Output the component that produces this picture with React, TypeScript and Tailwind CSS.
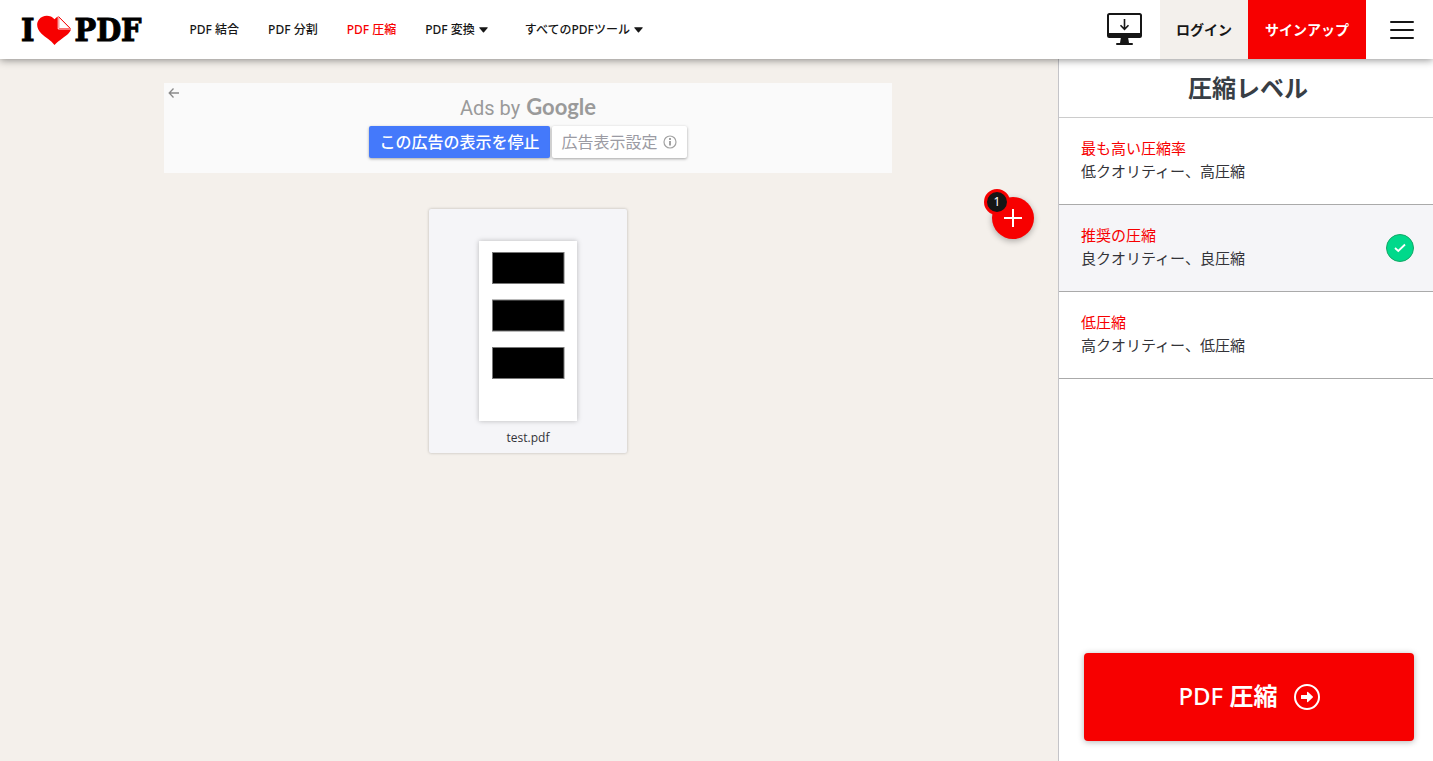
import { useState } from 'react';

const navItems = [
  { label: 'PDF 結合' },
  { label: 'PDF 分割' },
  { label: 'PDF 圧縮', active: true },
  { label: 'PDF 変換', menu: true },
  { label: 'すべてのPDFツール', menu: true },
];

const levels = [
  { id: 'extreme', title: '最も高い圧縮率', text: '低クオリティー、高圧縮' },
  { id: 'recommended', title: '推奨の圧縮', text: '良クオリティー、良圧縮' },
  { id: 'low', title: '低圧縮', text: '高クオリティー、低圧縮' },
];

function Logo() {
  return (
    <a
      href="#"
      aria-label="I love PDF"
      className="flex items-center font-['DejaVu_Serif_Condensed','DejaVu_Serif',serif] font-bold text-[32px] leading-8 text-black [-webkit-text-stroke:1px_black]"
    >
      <span>I</span>
      <svg width="36" height="32" viewBox="0 0 36 32" className="mx-0.5">
        <path
          d="M18.5 31 C15 26.500 9.500 23.500 5.500 19.800 C0.800 15.400 -0.200 9.500 3 5.500 C6.700 0.800 14.500 0.600 18.500 5.300 C19.600 4 21 2.900 22.500 2.200 L35 14.800 C34.300 19.500 30 21.600 26.500 24.300 C23.500 26.600 20.700 28.500 18.500 31Z"
          fill="#f70000"
        />
        <path d="M22.700 2.800 V14.500 H34.300Z" fill="#fff" stroke="#f70000" strokeWidth="1" />
        <path d="M22.200 2.500 V15 H34.800" fill="none" stroke="#fff" strokeWidth="0.900" />
      </svg>
      <span>PDF</span>
    </a>
  );
}

function Caret() {
  return (
    <svg width="9" height="6" viewBox="0 0 9 6" fill="currentColor">
      <path d="M0.600 0.300 H8.400 Q9 0.400 8.600 1 L5 5.300 Q4.500 5.800 4 5.300 L0.400 1 Q0 0.400 0.600 0.300Z" />
    </svg>
  );
}

function DesktopIcon() {
  return (
    <svg width="35" height="32" viewBox="0 0 35 32" fill="none" stroke="#161616">
      <rect x="1" y="1" width="33" height="23" rx="1.500" strokeWidth="2" />
      <path d="M1 20 H34 V23 Q34 24.500 32.500 24.500 H2.500 Q1 24.500 1 23Z" fill="#161616" stroke="none" />
      <path d="M14 24 H21 L22 30 H13Z" fill="#161616" stroke="none" />
      <path d="M10 31 H25" strokeWidth="2" strokeLinecap="round" />
      <path d="M17.500 6 V16 M13.500 12.300 L17.500 16.300 L21.500 12.300" strokeWidth="1.600" />
    </svg>
  );
}

function Header() {
  return (
    <header className="relative z-10 flex h-[59px] items-stretch bg-white shadow-[0_1px_8px_rgba(0,0,0,0.45)]">
      <div className="flex items-center pl-[21px]">
        <Logo />
      </div>
      <nav className="ml-12 flex flex-1 items-center gap-[29px] text-xs font-medium">
        {navItems.map((item) => (
          <a
            key={item.label}
            href="#"
            className={`flex items-center gap-1 whitespace-nowrap ${item.active ? 'text-[#f70000]' : 'text-[#161616]'} ${item.menu ? 'pr-2' : ''}`}
          >
            {item.label}
            {item.menu && <Caret />}
          </a>
        ))}
      </nav>
      <div className="flex items-stretch text-sm font-bold">
        <a href="#" aria-label="デスクトップ版" className="mr-[18px] flex items-center pb-px">
          <DesktopIcon />
        </a>
        <a href="#" className="flex items-center bg-[#f3f0ec] px-4 text-[#161616]">ログイン</a>
        <a href="#" className="flex items-center bg-[#f70000] px-[17px] text-white">サインアップ</a>
        <button aria-label="メニュー" className="flex items-center pr-[19px] pl-6">
          <svg width="24" height="18" viewBox="0 0 24 18" stroke="#161616" strokeWidth="2" strokeLinecap="round">
            <path d="M1 1 H23 M1 9 H23 M1 17 H23" />
          </svg>
        </button>
      </div>
    </header>
  );
}

function AdBanner() {
  return (
    <div className="relative flex h-[90px] w-full max-w-[728px] flex-col items-center bg-[#fafafa] pt-2.5">
      <button aria-label="戻る" className="absolute top-1 left-1">
        <svg width="12" height="12" viewBox="0 0 12 12" fill="none" stroke="#8a8a8a" strokeWidth="1.300">
          <path d="M11 6 H1.500 M5.500 1.500 L1.200 6 L5.500 10.500" />
        </svg>
      </button>
      <p className="flex h-[30px] items-baseline gap-1.5 text-[#9a9a9a]">
        <span className="font-[Roboto,sans-serif] text-xl leading-7">Ads by</span>
        <span className="font-[Lato,sans-serif] text-[22px] leading-7 font-bold">Google</span>
      </p>
      <div className="mt-[3px] flex gap-0.5 text-base leading-8">
        <button className="h-8 rounded-xs bg-[#4479fb] px-2.5 leading-[31px] font-medium text-white shadow-[0_1px_3px_rgba(0,0,0,0.35)]">
          この広告の表示を停止
        </button>
        <button className="flex h-8 items-center gap-[5px] rounded-xs bg-white px-2.5 text-[#9b9ba3] shadow-[0_1px_3px_rgba(0,0,0,0.35)]">
          広告表示設定
          <svg width="14" height="14" viewBox="0 0 14 14" fill="none" stroke="#a3a3a3">
            <circle cx="7" cy="7" r="6" strokeWidth="1.200" />
            <path d="M7 6 V10.500" strokeWidth="2" />
            <path d="M7 3 V5" strokeWidth="2" />
          </svg>
        </button>
      </div>
    </div>
  );
}

function FileCard() {
  return (
    <div className="mt-9 flex w-[198px] flex-col items-center rounded-xs bg-[#f5f5f8] pt-8 pb-1.5 shadow-[0_0_3px_rgba(0,0,0,0.25)]">
      <svg width="98" height="180" viewBox="0 0 98 180" className="bg-white shadow-[0_0_5px_rgba(0,0,0,0.25)]">
        <g fill="#000" stroke="#777" strokeWidth="1">
          <rect x="13.500" y="11.500" width="71.500" height="31" />
          <rect x="13.500" y="59" width="71.500" height="31" />
          <rect x="13.500" y="106.500" width="71.500" height="31" />
        </g>
      </svg>
      <span className="mt-2 font-['Open_Sans',sans-serif] text-xs leading-[18px] text-[#333338]">test.pdf</span>
    </div>
  );
}

export default function App() {
  const [level, setLevel] = useState('recommended');

  return (
    <div className="flex min-h-screen flex-col bg-[#f4f0eb] font-['Noto_Sans','Noto_Sans_CJK_JP',sans-serif] text-[#161616]" lang="ja">
      <Header />

      <div className="flex flex-1">
        {/* Workspace */}
        <main className="relative flex flex-1 flex-col items-center pt-6 pr-0.5">
          <AdBanner />
          <FileCard />

          <button
            aria-label="ファイルを追加"
            className="absolute top-[138px] right-6 flex size-[42px] items-center justify-center rounded-full bg-[#f70000] shadow-[0_2px_6px_rgba(0,0,0,0.3)]"
          >
            <svg width="18" height="18" viewBox="0 0 18 18" stroke="#fff" strokeWidth="2">
              <path d="M9 0 V18 M0 9 H18" />
            </svg>
            <span className="absolute -top-2 -left-2 size-[26px] rounded-full border-3 border-[#f70000] bg-[#161616] text-center text-xs leading-5 text-white">
              1
            </span>
          </button>
        </main>

        {/* Compression options */}
        <aside className="flex w-[375px] flex-col border-l border-[#c4c4c8] bg-white">
          <h1 className="border-b border-[#cccccc] pl-1 text-center text-2xl leading-[58px] font-bold text-[#383e45]">圧縮レベル</h1>

          <div role="radiogroup" aria-label="圧縮レベル">
            {levels.map((l) => (
              <label
                key={l.id}
                className="flex h-[87px] cursor-pointer items-center justify-between border-b border-[#aaaaaa] pr-[19px] pl-[22px] text-[15px] leading-[23px] has-checked:bg-[#f5f5f8]"
              >
                <span className="pb-0.5">
                  <span className="block text-[#f70000]">{l.title}</span>
                  <span className="block text-[#333338]">{l.text}</span>
                </span>
                <span className="grid place-items-center">
                  <input
                    type="radio"
                    name="level"
                    value={l.id}
                    checked={level === l.id}
                    onChange={() => setLevel(l.id)}
                    className="col-start-1 row-start-1 size-7 appearance-none rounded-full checked:border checked:border-[#12a866] checked:bg-[#00d98b]"
                  />
                  {level === l.id && (
                    <svg width="12" height="10" viewBox="0 0 12 10" fill="none" stroke="#fff" strokeWidth="1.800" className="col-start-1 row-start-1">
                      <path d="M1 5 L4.300 8 L11 1.500" />
                    </svg>
                  )}
                </span>
              </label>
            ))}
          </div>

          <button className="mt-auto mr-[19px] mb-5 ml-[25px] flex h-22 items-center justify-center gap-4 rounded bg-[#f70000] text-2xl font-medium text-white shadow-[0_1px_6px_rgba(0,0,0,0.3)]">
            <span className="pb-0.5">
              PDF <span className="font-bold">圧縮</span>
            </span>
            <svg width="26" height="26" viewBox="0 0 26 26" fill="none">
              <circle cx="13" cy="13" r="12" stroke="#fff" strokeWidth="2" />
              <path d="M7.500 11 H13 V8.200 Q13.300 7.500 14 8 L18.800 12.500 Q19.200 13 18.800 13.500 L14 18 Q13.300 18.500 13 17.800 V15 H7.500 Q7 15 7 14.500 V11.500 Q7 11 7.500 11Z" fill="#fff" />
            </svg>
          </button>
        </aside>
      </div>
    </div>
  );
}
